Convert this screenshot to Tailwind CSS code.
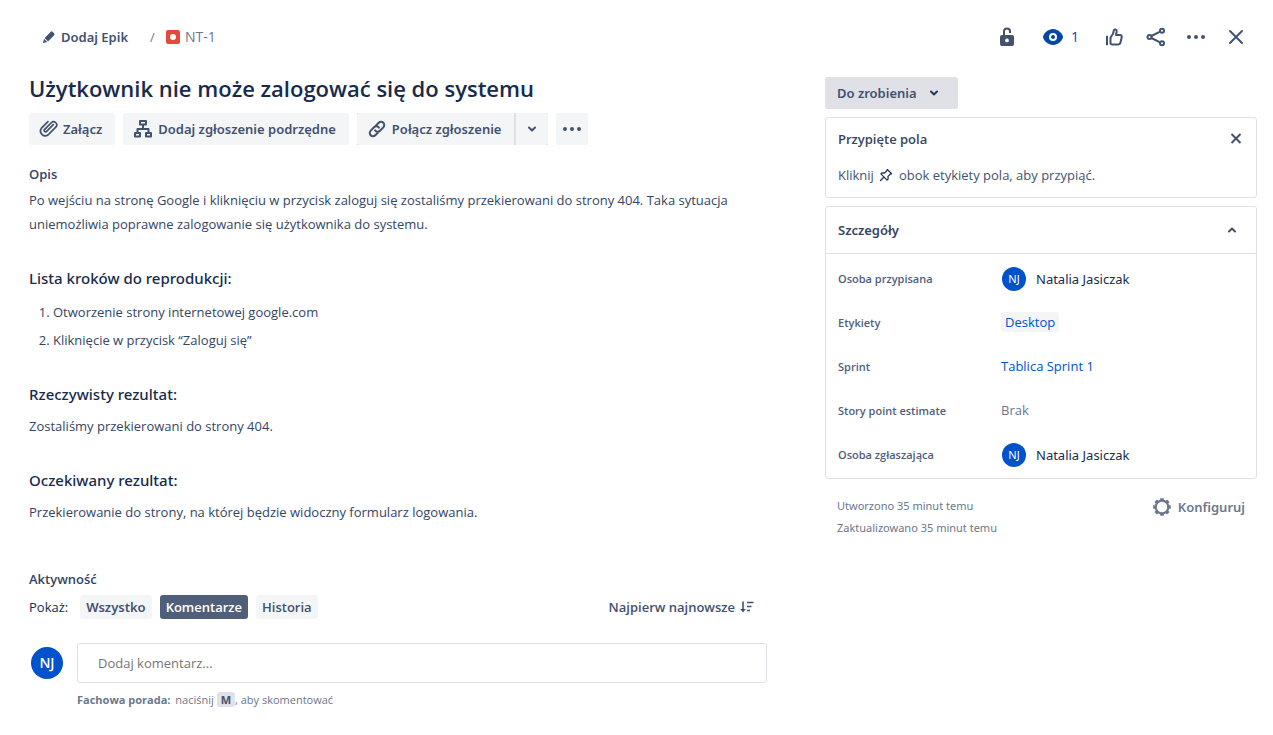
<!DOCTYPE html>
<html lang="pl">
<head>
<meta charset="utf-8">
<meta name="viewport" content="width=device-width, initial-scale=1">
<title>NT-1 Użytkownik nie może zalogować się do systemu</title>
<script src="https://cdn.jsdelivr.net/npm/@tailwindcss/browser@4"></script>
</head>
<body class="bg-white font-['Open_Sans','Noto_Sans',sans-serif] text-[13px] leading-6 text-[#172b4d]">
<header class="flex h-[34px] items-center justify-between mt-5 pl-[42px] pr-[25px]">
  <nav class="flex items-center" aria-label="Ścieżka">
    <button class="flex items-center gap-[5px] font-['Noto_Sans',sans-serif] font-semibold text-[#42526e]">
      <svg class="size-3.5" viewBox="0 0 14 14" fill="currentColor"><path d="M1 13l1-4.200 3.200 3.200zM2.600 8L8.800 1.800a1.300 1.300 0 0 1 1.800 0l1.600 1.600a1.300 1.300 0 0 1 0 1.800L6 11.400z"/></svg>
      Dodaj Epik
    </button>
    <span class="ml-[22px] w-4 text-[#6b778c]">/</span>
    <a href="#" class="flex items-center gap-[5px] text-[#6b778c]">
      <svg class="size-3.5" viewBox="0 0 14 14"><rect width="14" height="14" rx="2" fill="#e5493a"/><circle cx="7" cy="7" r="3" fill="#fff"/></svg>
      <span class="text-sm">NT-1</span>
    </a>
  </nav>
  <div class="flex items-center text-[#42526e]">
    <button aria-label="Blokada"><svg class="h-5 w-4" viewBox="0 0 16 20"><path d="M5 9V4.500a3 3 0 0 1 6 0V6" fill="none" stroke="currentColor" stroke-width="2"/><path fill-rule="evenodd" fill="currentColor" d="M3 8h10a2 2 0 0 1 2 2v7a2 2 0 0 1-2 2H3a2 2 0 0 1-2-2v-7a2 2 0 0 1 2-2zm5 3.500a1.900 1.900 0 1 0 0 3.800 1.900 1.900 0 0 0 0-3.800z"/></svg></button>
    <button class="ml-7 flex items-center gap-2 text-sm text-[#0747a6]" aria-label="Obserwuj, 1"><svg class="h-4 w-5" viewBox="0 0 20 16"><path fill="currentColor" d="M10 0C4.500 0 0 5.500 0 8s4.500 8 10 8 10-5.500 10-8-4.500-8-10-8z"/><circle cx="10" cy="8" r="3" fill="none" stroke="#fff" stroke-width="2"/></svg>1</button>
    <button class="ml-[25px]" aria-label="Lubię to"><svg class="size-5" viewBox="0 0 20 20" fill="none" stroke="currentColor" stroke-width="2" stroke-linejoin="round" stroke-linecap="round"><path d="M3 9.500v8M6.500 16V10.500L9.200 6.500 9.800 3.500C10.200 1.700 13 2.200 12.700 4.500L12 8h4c1.400 0 2 1 1.700 2.200l-1.300 5.600c-.2 1-.8 1.600-1.900 1.600H8.200c-1.100 0-1.700-.5-1.700-1.400z"/></svg></button>
    <button class="ml-[22px]" aria-label="Udostępnij"><svg class="size-5" viewBox="0 0 20 20" fill="none" stroke="currentColor" stroke-width="2"><circle cx="3.500" cy="10" r="2"/><circle cx="16" cy="3.700" r="2"/><circle cx="16" cy="16.300" r="2"/><path d="M5.400 9l8.700-4.400M5.400 11l8.700 4.400"/></svg></button>
    <button class="ml-5" aria-label="Więcej"><svg class="size-5" viewBox="0 0 20 20" fill="currentColor"><circle cx="3" cy="10" r="2"/><circle cx="10" cy="10" r="2"/><circle cx="17" cy="10" r="2"/></svg></button>
    <button class="ml-[18px]" aria-label="Zamknij"><svg class="size-6" viewBox="0 0 24 24" fill="none" stroke="currentColor" stroke-width="2" stroke-linecap="round"><path d="M6 6l12 12M18 6l-12 12"/></svg></button>
  </div>
</header>

<main class="grid grid-cols-[minmax(0,1fr)_432px] gap-x-[58px] pt-5 pr-4 pb-6 pl-[29px]">
  <section>
    <h1 class="text-[22px] leading-7 font-semibold">Użytkownik nie może zalogować się do systemu</h1>
    <div class="mt-[11px] flex gap-2 font-['Noto_Sans',sans-serif] font-semibold text-[#42526e]">
      <button class="flex h-8 items-center gap-1 rounded-[3px] bg-[#f4f5f7] pr-[13px] pl-2.5">
        <svg class="size-5" viewBox="0 0 20 20" fill="none" stroke="currentColor" stroke-width="1.800" stroke-linecap="round"><path d="M14.500 5.500l-7.200 7.200a1.500 1.500 0 0 1-2.100-2.100l7.200-7.200a3.300 3.300 0 0 1 4.700 4.700l-8 8a5 5 0 0 1-7-7l6.800-6.800" transform="translate(.5 .5) scale(.95)"/></svg>Załącz</button>
      <button class="flex h-8 items-center gap-[5px] rounded-[3px] bg-[#f4f5f7] pr-[13px] pl-2.5">
        <svg class="size-5" viewBox="0 0 20 20" fill="none" stroke="currentColor" stroke-width="2" stroke-linejoin="round"><rect x="7" y="2" width="6" height="3.500"/><rect x="2" y="14" width="5" height="3.500"/><rect x="13" y="14" width="5" height="3.500"/><path d="M10 5.500V10M4.500 14v-4h11v4"/></svg>Dodaj zgłoszenie podrzędne</button>
      <div class="flex gap-0.5 bg-[#dfe1e6]">
        <button class="flex h-8 items-center gap-[5px] rounded-l-[3px] bg-[#f4f5f7] pr-[13px] pl-2.5">
          <svg class="size-5" viewBox="0 0 20 20" fill="none" stroke="currentColor" stroke-width="2" stroke-linecap="round"><path d="M11 13.500l-2.700 2.700a3.200 3.200 0 0 1-4.600-4.600l3.300-3.300a3.200 3.200 0 0 1 4.900.4M9 6.500l2.700-2.700a3.200 3.200 0 0 1 4.600 4.600l-3.300 3.300a3.200 3.200 0 0 1-4.900-.4"/></svg>Połącz zgłoszenie</button>
        <button class="flex h-8 w-8 items-center justify-center rounded-r-[3px] bg-[#f4f5f7]" aria-label="Więcej opcji łączenia"><svg class="h-2 w-2.5" viewBox="0 0 10 8" fill="none" stroke="currentColor" stroke-width="2" stroke-linecap="round" stroke-linejoin="round"><path d="M2 2.500l3 3 3-3"/></svg></button>
      </div>
      <button class="flex h-8 w-8 items-center justify-center rounded-[3px] bg-[#f4f5f7]" aria-label="Więcej działań"><svg class="size-5" viewBox="0 0 20 20" fill="currentColor"><circle cx="3" cy="10" r="2"/><circle cx="10" cy="10" r="2"/><circle cx="17" cy="10" r="2"/></svg></button>
    </div>

    <h2 class="mt-[19px] leading-5 font-semibold text-[#344563]">Opis</h2>
    <div class="text-[#344563]">
      <p class="mt-1">Po wejściu na stronę Google i kliknięciu w przycisk zaloguj się zostaliśmy przekierowani do strony 404. Taka sytuacja uniemożliwia poprawne zalogowanie się użytkownika do systemu.</p>
      <h3 class="mt-[30px] font-['Noto_Sans',sans-serif] text-[15px] font-medium text-[#172b4d]">Lista kroków do reprodukcji:</h3>
      <ol class="mt-2.5 list-decimal space-y-1 pl-6">
        <li>Otworzenie strony internetowej google.com</li>
        <li>Kliknięcie w przycisk “Zaloguj się”</li>
      </ol>
      <h3 class="mt-[30px] font-['Noto_Sans',sans-serif] text-[15px] font-medium text-[#172b4d]">Rzeczywisty rezultat:</h3>
      <p class="mt-2">Zostaliśmy przekierowani do strony 404.</p>
      <h3 class="mt-[30px] font-['Noto_Sans',sans-serif] text-[15px] font-medium text-[#172b4d]">Oczekiwany rezultat:</h3>
      <p class="mt-2">Przekierowanie do strony, na której będzie widoczny formularz logowania.</p>
    </div>

    <h2 class="mt-[45px] leading-5 font-semibold text-[#344563]">Aktywność</h2>
    <div class="mt-1.5 flex items-center justify-between pr-3">
      <div class="flex items-center gap-2">
        <span class="mr-1">Pokaż:</span>
        <button class="rounded-[3px] bg-[#f4f5f7] px-1.5 font-['Noto_Sans',sans-serif] font-semibold text-[#42526e]">Wszystko</button>
        <button class="rounded-[3px] bg-[#505f79] px-1.5 font-semibold text-white">Komentarze</button>
        <button class="rounded-[3px] bg-[#f4f5f7] px-1.5 font-semibold text-[#42526e]">Historia</button>
      </div>
      <button class="flex items-center gap-1 font-semibold text-[#42526e]">Najpierw najnowsze
        <svg class="size-4" viewBox="0 0 16 16" fill="none" stroke="currentColor" stroke-width="1.600"><path d="M4 2.500v9M8 3.500h6.500M8 7.500h4.500M8 11.500h3"/><path d="M1.200 10h5.600L4 13.500z" fill="currentColor" stroke="none"/></svg></button>
    </div>
    <div class="mt-6 flex">
      <div class="mt-1 mr-3.5 ml-0.5 flex size-8 shrink-0 items-center justify-center rounded-full bg-[#0052cc] text-sm font-semibold text-white">NJ</div>
      <div class="min-w-0 flex-1">
        <input type="text" aria-label="Komentarz" placeholder="Dodaj komentarz..." class="block h-10 w-full rounded-[3px] border border-[#dfe1e6] px-5 placeholder:text-[#757575]">
        <p class="mt-[7px] text-[11px] leading-5 text-[#6b778c]"><strong class="mr-0.5 font-bold">Fachowa porada:</strong> naciśnij <kbd class="rounded-[3px] bg-[#dfe1e6] px-1 font-['Open_Sans',sans-serif] font-bold text-[#42526e]">M</kbd>, aby skomentować</p>
      </div>
    </div>
  </section>

  <aside class="pt-[3px]">
    <button class="flex h-8 items-center gap-3 rounded-[3px] bg-[#dfe1e6] pr-[19px] pl-3 font-['Noto_Sans',sans-serif] font-semibold text-[#42526e]">Do zrobienia
      <svg class="h-2 w-2.5" viewBox="0 0 10 8" fill="none" stroke="#253858" stroke-width="2" stroke-linecap="round" stroke-linejoin="round"><path d="M2 2.500l3 3 3-3"/></svg></button>
    <section class="mt-2 rounded-[3px] border border-[#dfe1e6] px-3 pt-[9px] pb-2.5">
      <div class="flex items-center justify-between">
        <h2 class="font-semibold text-[#344563]">Przypięte pola</h2>
        <button aria-label="Zamknij przypięte pola"><svg class="size-4" viewBox="0 0 16 16" fill="none" stroke="#42526e" stroke-width="2"><path d="M3.500 3l9 9M12.500 3l-9 9"/></svg></button>
      </div>
      <p class="mt-3 flex items-center text-[#42526e]">Kliknij
        <svg class="mr-1.5 ml-[5px] size-3.5" viewBox="0 0 14 14" fill="none" stroke="#253858" stroke-width="1.300" stroke-linejoin="round" stroke-linecap="round"><path d="M8.300 1.500l4.300 4.300-1.400.400-2.200 2.200.1 2.700-1 1L1.900 5.900l1-1 2.700.100 2.200-2.200zM4.500 9.500L1.500 12.500"/></svg>
        obok etykiety pola, aby przypiąć.</p>
    </section>
    <section class="mt-2 rounded-[3px] border border-[#dfe1e6]">
      <h2 class="border-b border-[#dfe1e6] font-['Noto_Sans',sans-serif] font-semibold text-[#344563]">
        <button class="flex h-[46px] w-full items-center justify-between pr-[19px] pl-3" aria-expanded="true">Szczegóły
          <svg class="h-2 w-2.5" viewBox="0 0 10 8" fill="none" stroke="#42526e" stroke-width="2" stroke-linecap="round" stroke-linejoin="round"><path d="M2 5.500l3-3 3 3"/></svg></button>
      </h2>
      <dl class="grid grid-cols-[163px_1fr] auto-rows-[44px] items-center pt-[3px] pb-px pl-3">
        <dt class="text-[11px] font-semibold text-[#505f79]">Osoba przypisana</dt>
        <dd class="flex items-center gap-2.5 pl-px font-['Noto_Sans',sans-serif]"><span class="flex size-6 items-center justify-center rounded-full bg-[#0052cc] text-[11px] text-white">NJ</span>Natalia Jasiczak</dd>
        <dt class="text-[11px] font-semibold text-[#505f79]">Etykiety</dt>
        <dd class="pb-0.5"><a href="#" class="rounded-[3px] bg-[#f4f5f7] px-1 py-px text-[#0052cc]">Desktop</a></dd>
        <dt class="text-[11px] font-semibold text-[#505f79]">Sprint</dt>
        <dd class="pb-0.5"><a href="#" class="text-[#0052cc]">Tablica Sprint 1</a></dd>
        <dt class="text-[11px] font-semibold text-[#505f79]">Story point estimate</dt>
        <dd class="pb-0.5 text-[#6b778c]">Brak</dd>
        <dt class="text-[11px] font-semibold text-[#505f79]">Osoba zgłaszająca</dt>
        <dd class="flex items-center gap-2.5 pl-px font-['Noto_Sans',sans-serif]"><span class="flex size-6 items-center justify-center rounded-full bg-[#0052cc] text-[11px] text-white">NJ</span>Natalia Jasiczak</dd>
      </dl>
    </section>
    <footer class="mt-4 flex items-start justify-between px-3 text-[#6b778c]">
      <div class="font-['Noto_Sans',sans-serif] text-[11px] leading-[22px]"><p>Utworzono 35 minut temu</p><p>Zaktualizowano 35 minut temu</p></div>
      <button class="flex items-center gap-1.5 font-['Noto_Sans',sans-serif] font-semibold">
        <svg class="size-5" viewBox="0 0 20 20" fill="none" stroke="currentColor"><circle cx="10" cy="10" r="6.300" stroke-width="2.200"/><path stroke-width="3.600" d="M10 1.200v2.500M10 16.300v2.500M1.200 10h2.500M16.300 10h2.500M3.700 3.700l1.800 1.800M14.500 14.500l1.800 1.800M3.700 16.300l1.800-1.800M14.500 5.500l1.800-1.800"/></svg>Konfiguruj</button>
    </footer>
  </aside>
</main>
</body>
</html>
